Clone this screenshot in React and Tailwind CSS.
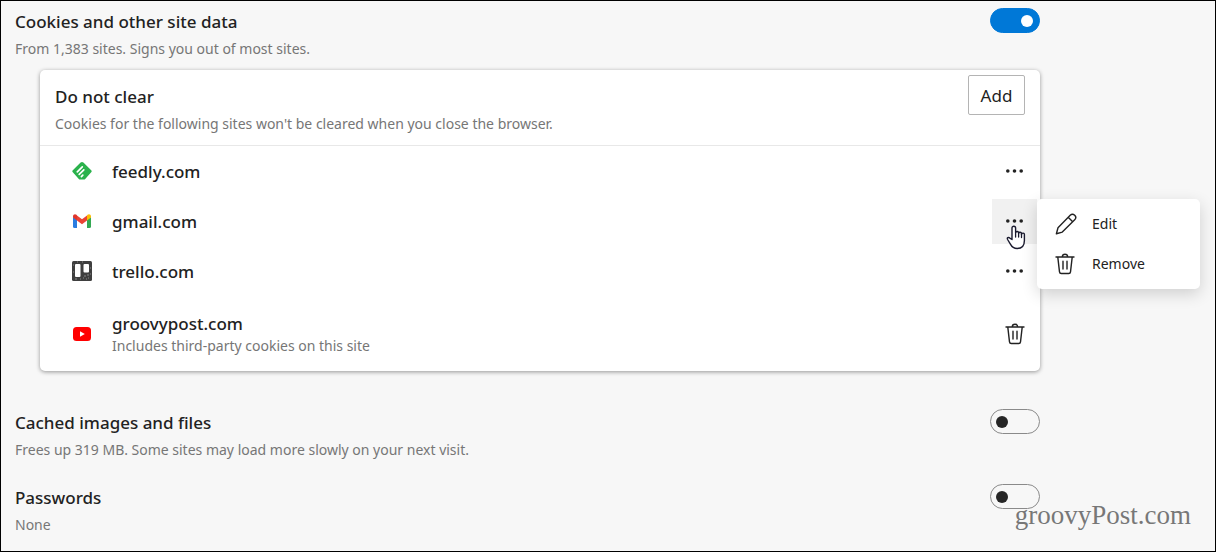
import { useState } from 'react';

const SITES = [
  { name: 'feedly.com', icon: FeedlyIcon },
  { name: 'gmail.com', icon: GmailIcon },
  { name: 'trello.com', icon: TrelloIcon },
];

function FeedlyIcon() {
  return (
    <svg width="20" height="20" viewBox="0 0 20 20" aria-hidden="true">
      <path d="M8.600 1.600a2 2 0 0 1 2.800 0l7.800 7.700a1.400 1.400 0 0 1 0 2L13.200 18a1.800 1.800 0 0 1-1.300.5H8.100a1.800 1.800 0 0 1-1.300-.5L.8 11.300a1.400 1.400 0 0 1 0-2z" fill="#2bb24c" />
      <path d="M5.300 10.800l5-5M7.200 13.300l4.600-4.500M9.400 15.600l1.400-1.400" stroke="#fff" strokeWidth="1.700" strokeLinecap="round" fill="none" />
    </svg>
  );
}

function GmailIcon() {
  return (
    <svg width="20" height="20" viewBox="0 0 20 20" aria-hidden="true">
      <path d="M1 6v9.500a1.500 1.500 0 0 0 1.500 1.500H5V8.500z" fill="#2a7de1" />
      <path d="M15 8.500V17h2.500a1.500 1.500 0 0 0 1.500-1.500V6z" fill="#34a853" />
      <path d="M15 4.500v5l4-3V5.200c0-2-2.200-2.600-3.500-1.500z" fill="#fbbc04" />
      <path d="M5 4.500v5l5 3.700 5-3.700v-5l-5 3.800z" fill="#ea4335" />
      <path d="M1 5.200v1.300l4 3v-5l-.5-.8C3.200 2.600 1 3.200 1 5.200z" fill="#e0352b" />
    </svg>
  );
}

function TrelloIcon() {
  return (
    <svg width="20" height="20" viewBox="0 0 20 20" aria-hidden="true">
      <rect width="20" height="20" rx="1.500" fill="#3f3f3f" />
      <path d="M1 4h1M3 18h2M8 18h1M12 15h2M16 17h1M14 18h1M10 1h1M18 7h1M18 13h1M11 17h1M1 11h1M5 1h1M15 14h2" stroke="#8a8a8a" strokeWidth="1" />
      <rect x="3" y="3" width="5.500" height="13" rx="1" fill="#fff" />
      <rect x="11.500" y="3" width="5.500" height="8.500" rx="1" fill="#fff" />
    </svg>
  );
}

function YoutubeIcon() {
  return (
    <svg width="20" height="20" viewBox="0 0 20 20" aria-hidden="true">
      <rect x="1" y="3" width="18" height="14" rx="3.500" fill="#f00" />
      <path d="M8 7.200v5.600l4.800-2.800z" fill="#fff" />
    </svg>
  );
}

function TrashIcon() {
  return (
    <svg width="20" height="22" viewBox="0 0 20 22" fill="none" stroke="#222" strokeWidth="1.400" strokeLinecap="round" strokeLinejoin="round" aria-hidden="true">
      <path d="M1 4h18M7.300 3.900a2.700 2.600 0 0 1 5.400 0M2.800 4.200l1.700 14.700a1.800 1.800 0 0 0 1.800 1.600h7.400a1.800 1.800 0 0 0 1.800-1.600L17.200 4.200M8 8.200v7.800M12 8.200v7.800" />
    </svg>
  );
}

function PencilIcon() {
  return (
    <svg width="22" height="22" viewBox="0 0 22 22" fill="none" stroke="#222" strokeWidth="1.400" strokeLinejoin="round" aria-hidden="true">
      <path d="M15.200 2.300a3.100 3.100 0 0 1 4.500 4.500L7.300 19.100 1.400 20.700 3 14.700zM13.200 4.300l4.500 4.500" />
    </svg>
  );
}

function DotsIcon() {
  return (
    <svg width="17" height="4" viewBox="0 0 17 4" fill="#222" aria-hidden="true">
      <circle cx="1.800" cy="2" r="1.800" />
      <circle cx="8.500" cy="2" r="1.800" />
      <circle cx="15.200" cy="2" r="1.800" />
    </svg>
  );
}

function HandCursor() {
  return (
    <svg className="pointer-events-none absolute top-[26px] left-[14px] z-20" width="20" height="25" viewBox="0 0 20 25" aria-hidden="true">
      <path
        d="M6 14.500V3a1.800 1.800 0 0 1 3.600 0v4.600a1.600 1.600 0 0 1 3-.1v.8a1.500 1.500 0 0 1 2.900.3v.8a1.400 1.400 0 0 1 2.900.4V15.500c0 4.800-2.600 8-7.200 8-3.300 0-5.300-1.500-6.800-4.400l-2.800-4.600c-.9-1.700.9-2.600 2.200-1.400z"
        fill="#fff"
        stroke="#1a1a2e"
        strokeWidth="1.400"
        strokeLinejoin="round"
      />
      <path d="M9.600 7.500v4.500M12.600 8V12M15.500 9V12.500" stroke="#1a1a2e" strokeWidth="1.300" strokeLinecap="round" />
    </svg>
  );
}

function ToggleRow({ id, title, detail, on }) {
  const [checked, setChecked] = useState(on);
  return (
    <div className="flex items-start justify-between">
      <div>
        <label htmlFor={id} className="block text-[17px] leading-[27px] font-medium text-[#222]">{title}</label>
        <p className="text-sm leading-[27px] text-[#767676]">{detail}</p>
      </div>
      <input
        id={id}
        type="checkbox"
        role="switch"
        checked={checked}
        onChange={(e) => setChecked(e.target.checked)}
        className="flex h-[25px] w-[50px] shrink-0 appearance-none items-center rounded-full border border-[#8a8a8a] px-[5px] before:size-3 before:rounded-full before:bg-[#262626] checked:justify-end checked:border-[#0078d7] checked:bg-[#0078d7] checked:px-[6px] checked:before:bg-white"
      />
    </div>
  );
}

function SiteMenu() {
  return (
    <div role="menu" className="absolute top-0 left-full z-10 flex w-[163px] flex-col rounded-[5px] bg-white py-[5px] shadow-[0_5px_16px_rgba(0,0,0,0.16)]">
      <button role="menuitem" className="flex h-10 items-center gap-[15px] pl-[18px] text-sm text-[#222]">
        <PencilIcon />
        Edit
      </button>
      <button role="menuitem" className="flex h-10 items-center gap-[15px] pl-[18px] text-sm text-[#222]">
        <span className="flex w-[22px]"><TrashIcon /></span>
        Remove
      </button>
    </div>
  );
}

export default function App() {
  const [openSite, setOpenSite] = useState('gmail.com');

  return (
    <div className="relative min-h-screen border border-black bg-[#f7f7f7] pt-[7px] pr-[175px] pb-3 pl-[14px] font-['Noto_Sans','Open_Sans',sans-serif]">
      <ToggleRow id="cookies" title="Cookies and other site data" detail="From 1,383 sites. Signs you out of most sites." on={true} />

      <section className="mt-2 ml-[25px] rounded-[5px] bg-white shadow-[0_1px_4px_rgba(0,0,0,0.4)]">
        <div className="flex items-start justify-between border-b border-[#e8e8e8] pt-[5px] pr-[15px] pb-2 pl-[15px]">
          <div className="pt-2">
            <h2 className="text-[17px] leading-[27px] font-medium text-[#222]">Do not clear</h2>
            <p className="text-sm leading-[27px] text-[#767676]">Cookies for the following sites won't be cleared when you close the browser.</p>
          </div>
          <button className="h-10 w-[57px] rounded-[2px] border border-[#b4b4b4] pt-[2px] text-[17px] text-[#222]">Add</button>
        </div>
        <ul>
          {SITES.map(({ name, icon: Icon }) => (
            <li key={name} className="flex h-[50px] items-center pr-[3px] pl-8">
              <Icon />
              <span className="ml-5 flex-1 pt-[2px] text-[17px] font-medium text-[#222]">{name}</span>
              <div className="relative">
                <button
                  aria-label={`More actions for ${name}`}
                  onClick={() => setOpenSite(openSite === name ? null : name)}
                  className={`flex size-[45px] items-center justify-center ${openSite === name ? 'bg-[#f1f1f1]' : ''}`}
                >
                  <DotsIcon />
                </button>
                {openSite === name && <HandCursor />}
                {openSite === name && <SiteMenu />}
              </div>
            </li>
          ))}
          <li className="flex h-[75px] items-center pr-[3px] pl-8">
            <YoutubeIcon />
            <div className="ml-5 flex-1 pt-[2px]">
              <p className="text-[17px] leading-[22px] font-medium text-[#222]">groovypost.com</p>
              <p className="text-sm leading-[22px] text-[#767676]">Includes third-party cookies on this site</p>
            </div>
            <button aria-label="Remove groovypost.com" className="flex size-[45px] items-center justify-center">
              <TrashIcon />
            </button>
          </li>
        </ul>
      </section>

      <div className="mt-[38px] flex flex-col gap-[21px]">
        <ToggleRow id="cached" title="Cached images and files" detail="Frees up 319 MB. Some sites may load more slowly on your next visit." on={false} />
        <ToggleRow id="passwords" title="Passwords" detail="None" on={false} />
      </div>

      <p className="absolute right-6 bottom-5 font-['Liberation_Serif',serif] text-[27px] leading-8 text-[#777]">groovyPost.com</p>
    </div>
  );
}
